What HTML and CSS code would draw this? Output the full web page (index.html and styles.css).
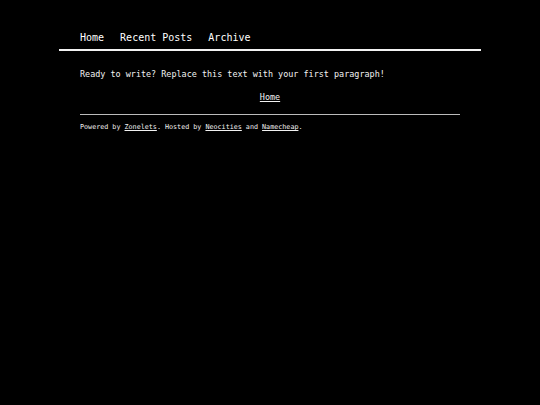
FILE: index.html
```html
<!DOCTYPE html>
<html>
<head>
<meta charset="utf-8">
<link rel="stylesheet" href="styles.css">
</head>
<body>
<header class="site-header">
  <nav class="nav">
    <a href="#">Home</a>
    <a href="#">Recent Posts</a>
    <a href="#">Archive</a>
  </nav>
</header>
<main class="content">
  <p class="intro">Ready to write? Replace this text with your first paragraph!</p>
  <div class="post-nav"><a href="#">Home</a></div>
  <footer class="footer">Powered by <a href="#">Zonelets</a>. Hosted by <a href="#">Neocities</a> and <a href="#">Namecheap</a>.</footer>
</main>
</body>
</html>
```
FILE: styles.css
```css
html, body {
  margin: 0;
  padding: 0;
  background: #000;
  color: #f2f2f2;
  font-family: "DejaVu Sans Mono", monospace;
}
a { color: #f2f2f2; }
.site-header {
  width: 422px;
  margin: 0 auto;
  padding: 32px 0 5px;
  border-bottom: 2px solid #f2f2f2;
}
.nav {
  display: flex;
  gap: 16px;
  padding-left: 21px;
  font-size: 10px;
  line-height: 12px;
}
.nav a { text-decoration: none; color: #fff; }
.content {
  width: 380px;
  margin: 0 auto;
}
.intro {
  margin: 18px 0 0;
  font-size: 8.45px;
  line-height: 10px;
}
.post-nav {
  margin-top: 13px;
  text-align: center;
  font-size: 8.45px;
  line-height: 10px;
}
.footer {
  margin-top: 12px;
  border-top: 1px solid #bbb;
  padding-top: 8px;
  font-size: 6.73px;
  line-height: 8px;
}
```
